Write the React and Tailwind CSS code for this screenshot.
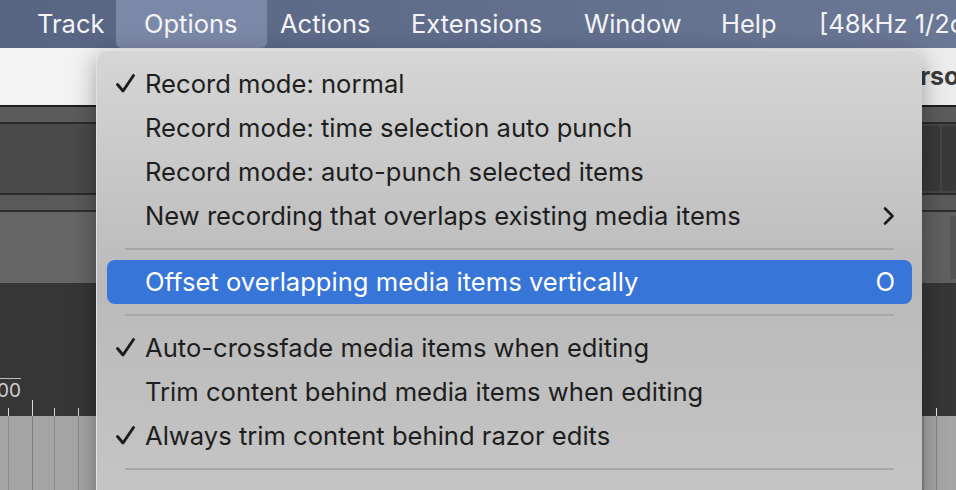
import React from "react";

function Check() {
  return (
    <svg width="22" height="22" viewBox="0 0 22 22" className="shrink-0">
      <path d="M2.5 11.5 L8 18 L18.5 2.5" fill="none" stroke="#1c1c1c" strokeWidth="2.9" strokeLinecap="round" strokeLinejoin="round" />
    </svg>
  );
}

function Chevron() {
  return (
    <svg width="12" height="18" viewBox="0 0 12 18">
      <path d="M2 1.5 L9.5 9 L2 16.5" fill="none" stroke="#1c1c1c" strokeWidth="2.6" strokeLinecap="round" strokeLinejoin="round" />
    </svg>
  );
}

function Item({ checked, label, right, highlight }) {
  return (
    <div
      className={
        "flex items-center h-[44px] rounded-[8px] pr-[17px] " +
        (highlight ? "bg-[#3875d9] text-white" : "text-[#1e1e1e]")
      }
    >
      <div className="w-[38px] pl-[8px] flex items-center shrink-0">{checked ? <Check /> : null}</div>
      <div className="flex-1 whitespace-nowrap">{label}</div>
      <div className="flex items-center">{right}</div>
    </div>
  );
}

function Sep() {
  return (
    <div className="h-[22px] flex items-center px-[18px]">
      <div className="h-[2px] w-full bg-[#a7a7a7]" />
    </div>
  );
}

export default function App() {
  const font = { fontFamily: "Inter, 'Noto Sans', sans-serif" };
  return (
    <div className="relative w-[956px] h-[490px] overflow-hidden bg-[#363636]" style={font}>
      {/* menu bar */}
      <div className="h-[48px] flex items-stretch bg-gradient-to-r from-[#576583] to-[#6a7795] text-[#f4f4f6] text-[25.5px] pl-[37px] whitespace-nowrap overflow-hidden">
        <div className="w-[79px] shrink-0 flex items-center">Track</div>
        <div className="w-[151px] shrink-0 flex items-center pl-[28px] bg-[#7b88a7] rounded-b-[6px]">Options</div>
        <div className="w-[131px] shrink-0 flex items-center pl-[13px]">Actions</div>
        <div className="w-[173px] shrink-0 flex items-center pl-[13px]">Extensions</div>
        <div className="w-[137px] shrink-0 flex items-center pl-[13px]">Window</div>
        <div className="w-[98px] shrink-0 flex items-center pl-[13px]">Help</div>
        <div className="shrink-0 flex items-center pl-[13px]">[48kHz 1/2ch</div>
      </div>

      {/* background window */}
      <div className="flex flex-col">
        <div className="h-[57px] bg-gradient-to-r from-[#f3f3f3] to-[#ececec] flex justify-end items-center overflow-hidden">
          <span className="text-[25px] font-bold text-[#3a3a3a] mr-[-19px]">erson</span>
        </div>
        <div className="h-[2px] bg-[#1d1d1d]" />
        <div className="h-[15px] bg-[#5c5c5c]" />
        <div className="h-[2px] bg-[#2b2b2b]" />
        <div className="h-[69px] bg-gradient-to-r from-[#4a4a4a] to-[#454545] flex justify-end">
          <div className="w-[34px] flex gap-[2px] py-[2px]">
            <div className="w-[18px] bg-[#393939] rounded-[2px]" />
            <div className="flex-1 bg-[#393939] rounded-[2px]" />
          </div>
        </div>
        <div className="h-[2px] bg-[#2b2b2b]" />
        <div className="h-[15px] bg-[#5a5a5a]" />
        <div className="h-[2px] bg-[#2e2e2e]" />
        <div className="h-[71px] bg-gradient-to-r from-[#666666] to-[#606060] flex justify-end py-[4px]">
          <div className="w-[6px] bg-[#555555]" />
        </div>
        <div className="h-[133px] bg-[#363636] relative">
          <div className="absolute left-0 top-[95px] w-[21px] h-[1px] bg-[#bdbdbd]" />
          <div className="absolute left-[-3px] top-[98px] text-[19px] leading-[20px] text-[#d0d0d0]">00</div>
          <div className="absolute left-[8px] top-[125px] w-[1px] h-[8px] bg-[#d8d8d8]" />
          <div className="absolute left-[32px] top-[117px] w-[1px] h-[16px] bg-[#d8d8d8]" />
          <div className="absolute left-[54px] top-[125px] w-[1px] h-[8px] bg-[#d8d8d8]" />
          <div className="absolute left-[78px] top-[125px] w-[1px] h-[8px] bg-[#d8d8d8]" />
          <div className="absolute left-[936px] top-[125px] w-[1px] h-[8px] bg-[#e8e8e8]" />
        </div>
        <div className="h-[80px] bg-[#a5a5a5] relative">
          <div className="absolute left-[8px] top-0 w-[1px] h-full bg-[#8c8c8c]" />
          <div className="absolute left-[32px] top-0 w-[1px] h-full bg-[#7e7e7e]" />
          <div className="absolute left-[54px] top-0 w-[1px] h-full bg-[#8c8c8c]" />
          <div className="absolute left-[78px] top-0 w-[1px] h-full bg-[#8c8c8c]" />
          <div className="absolute left-[922px] top-0 w-[2px] h-full bg-[#8a8a8a]" />
          <div className="absolute left-[936px] top-0 w-[1px] h-full bg-[#868686]" />
        </div>
      </div>

      {/* dropdown menu */}
      <div className="absolute left-[96px] top-[50px] w-[826px] h-[470px] rounded-[12px] bg-gradient-to-b from-[#d6d6d6] via-[#bababa] to-[#c6c6c6] border-l border-t border-[#e2e2e2] shadow-[0_6px_24px_rgba(0,0,0,0.35)] px-[10px] pt-[11px] text-[25.6px] leading-none">
        <Item checked label="Record mode: normal" />
        <Item label="Record mode: time selection auto punch" />
        <Item label="Record mode: auto-punch selected items" />
        <Item label="New recording that overlaps existing media items" right={<Chevron />} />
        <Sep />
        <Item highlight label="Offset overlapping media items vertically" right={<span>O</span>} />
        <Sep />
        <Item checked label="Auto-crossfade media items when editing" />
        <Item label="Trim content behind media items when editing" />
        <Item checked label="Always trim content behind razor edits" />
        <Sep />
      </div>
    </div>
  );
}
